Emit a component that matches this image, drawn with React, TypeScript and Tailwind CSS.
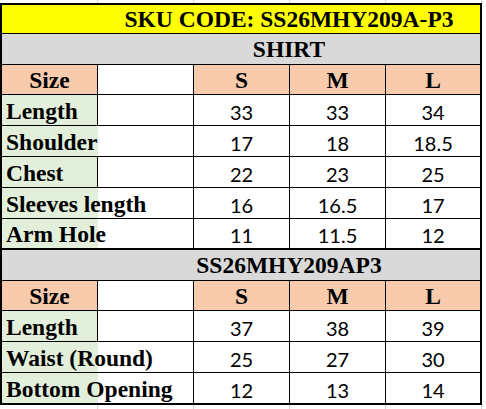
const serif = "font-['Liberation_Serif','Times_New_Roman',serif] font-bold";
const sans = "font-['Lato','Open_Sans',sans-serif]";
const grid = 'grid grid-cols-[96px_96px_96px_96px_94px]';
const faint = 'grid grid-cols-[98px_96px_96px_96px_96px] w-[482px]';

type Row = { label: string; spill?: boolean; values: string[] };

const shirt: Row[] = [
  { label: 'Length', values: ['33', '33', '34'] },
  { label: 'Shoulder', spill: true, values: ['17', '18', '18.5'] },
  { label: 'Chest', values: ['22', '23', '25'] },
  { label: 'Sleeves length', spill: true, values: ['16', '16.5', '17'] },
  { label: 'Arm Hole', spill: true, values: ['11', '11.5', '12'] },
];

const trouser: Row[] = [
  { label: 'Length', values: ['37', '38', '39'] },
  { label: 'Waist (Round)', spill: true, values: ['25', '27', '30'] },
  { label: 'Bottom Opening', spill: true, values: ['12', '13', '14'] },
];

function Banner({ text, className }: { text: string; className: string }) {
  return (
    <div className={`${grid} ${className} border-black`}>
      <div />
      <div className={`col-span-4 flex items-center justify-center pt-[1px] ${serif} text-[23.5px] leading-none`}>
        {text}
      </div>
    </div>
  );
}

function SizeHeader() {
  const head = `flex items-center justify-center pt-[2px] bg-[#f8cbad] ${serif} text-[23.5px] leading-none`;
  return (
    <div className={`${grid} h-[30px] border-b border-black`}>
      <div className={`${head} border-r border-black`}>Size</div>
      <div className="border-r border-black" />
      <div className={`${head} border-r border-black`}>S</div>
      <div className={`${head} border-r border-black`}>M</div>
      <div className={head}>L</div>
    </div>
  );
}

function DataRow({ row, className }: { row: Row; className: string }) {
  return (
    <div className={`${grid} ${className} border-black`}>
      <div
        className={`flex items-center bg-[#e2efda] pl-[4px] pt-[3px] whitespace-nowrap overflow-visible ${serif} text-[23.5px] leading-none ${
          row.spill ? '' : 'border-r border-black'
        }`}
      >
        {row.label}
      </div>
      <div className="border-r border-black" />
      {row.values.map((v, i) => (
        <div
          key={i}
          className={`flex items-center justify-center pt-[3px] ${sans} text-[20px] leading-none ${
            i < 2 ? 'border-r border-black' : ''
          }`}
        >
          {v}
        </div>
      ))}
    </div>
  );
}

function FaintStrip({ h }: { h: string }) {
  return (
    <div className={`${faint} ${h}`}>
      {[0, 1, 2, 3, 4].map((i) => (
        <div key={i} className="border-r border-[#d4d4d4]" />
      ))}
    </div>
  );
}

export default function App() {
  return (
    <div className="w-[486px] h-[409px] bg-white text-black overflow-hidden">
      <FaintStrip h="h-[3px]" />
      <div className="w-[482px] border-2 border-black">
        <Banner text="SKU CODE: SS26MHY209A-P3" className="h-[29px] bg-[#ffff00] border-b" />
        <Banner text="SHIRT" className="h-[31px] bg-[#d9d9d9] border-b" />
        <SizeHeader />
        {shirt.map((r, i) => (
          <DataRow
            key={r.label}
            row={r}
            className={i === shirt.length - 1 ? 'h-[31px] border-b-2' : 'h-[31px] border-b'}
          />
        ))}
        <Banner text="SS26MHY209AP3" className="h-[31px] bg-[#d9d9d9] border-b" />
        <SizeHeader />
        {trouser.map((r, i) => (
          <DataRow
            key={r.label}
            row={r}
            className={i === trouser.length - 1 ? 'h-[30px]' : 'h-[31px] border-b'}
          />
        ))}
      </div>
      <FaintStrip h="h-[4px]" />
    </div>
  );
}
